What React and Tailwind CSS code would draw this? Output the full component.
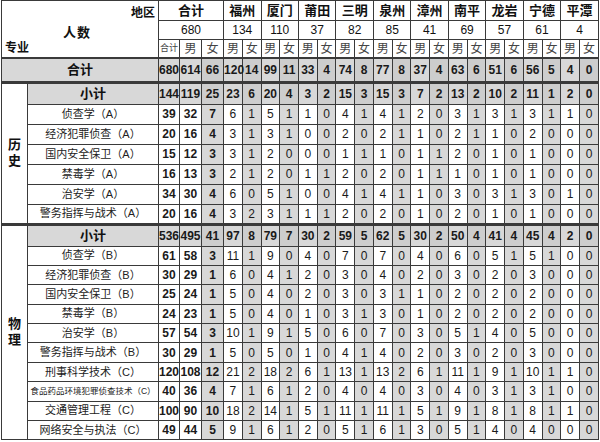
import React from "react";

const regions = ["福州", "厦门", "莆田", "三明", "泉州", "漳州", "南平", "龙岩", "宁德", "平潭"];
const regionTotals = [134, 110, 37, 82, 85, 41, 69, 57, 61, 4];
const totalRow = [680, 614, 66, 120, 14, 99, 11, 33, 4, 74, 8, 77, 8, 37, 4, 63, 6, 51, 6, 56, 5, 4, 0];

const groups = [
  {
    label: ["历", "史"],
    sub: [144, 119, 25, 23, 6, 20, 4, 3, 2, 15, 3, 15, 3, 7, 2, 13, 2, 10, 2, 11, 1, 2, 0],
    rows: [
      ["侦查学（A）", [39, 32, 7, 6, 1, 5, 1, 1, 0, 4, 1, 4, 1, 2, 0, 3, 1, 3, 1, 3, 1, 1, 0]],
      ["经济犯罪侦查（A）", [20, 16, 4, 3, 1, 3, 1, 0, 0, 2, 0, 2, 1, 1, 0, 2, 1, 1, 0, 2, 0, 0, 0]],
      ["国内安全保卫（A）", [15, 12, 3, 3, 1, 2, 0, 0, 0, 1, 1, 1, 0, 1, 1, 2, 0, 1, 0, 1, 0, 0, 0]],
      ["禁毒学（A）", [16, 13, 3, 2, 1, 2, 0, 1, 1, 2, 0, 2, 0, 1, 1, 1, 0, 1, 0, 1, 0, 0, 0]],
      ["治安学（A）", [34, 30, 4, 6, 0, 5, 1, 0, 0, 4, 1, 4, 1, 1, 0, 3, 0, 3, 1, 3, 0, 1, 0]],
      ["警务指挥与战术（A）", [20, 16, 4, 3, 2, 3, 1, 1, 1, 2, 0, 2, 0, 1, 0, 2, 0, 1, 0, 1, 0, 0, 0]],
    ],
    h: "h-[20px]",
  },
  {
    label: ["物", "理"],
    sub: [536, 495, 41, 97, 8, 79, 7, 30, 2, 59, 5, 62, 5, 30, 2, 50, 4, 41, 4, 45, 4, 2, 0],
    rows: [
      ["侦查学（B）", [61, 58, 3, 11, 1, 9, 0, 4, 0, 7, 0, 7, 0, 4, 0, 6, 0, 5, 1, 5, 1, 0, 0]],
      ["经济犯罪侦查（B）", [30, 29, 1, 6, 0, 4, 1, 2, 0, 3, 0, 4, 0, 2, 0, 3, 0, 2, 0, 3, 0, 0, 0]],
      ["国内安全保卫（B）", [25, 24, 1, 5, 0, 4, 0, 2, 0, 3, 0, 3, 1, 1, 0, 2, 0, 2, 0, 2, 0, 0, 0]],
      ["禁毒学（B）", [24, 23, 1, 5, 0, 4, 0, 1, 0, 3, 1, 3, 0, 1, 0, 2, 0, 2, 0, 2, 0, 0, 0]],
      ["治安学（B）", [57, 54, 3, 10, 1, 9, 1, 5, 0, 6, 0, 7, 0, 3, 0, 5, 1, 4, 0, 5, 0, 0, 0]],
      ["警务指挥与战术（B）", [30, 29, 1, 5, 0, 5, 0, 1, 0, 4, 1, 4, 0, 2, 0, 3, 0, 2, 0, 3, 0, 0, 0]],
      ["刑事科学技术（C）", [120, 108, 12, 21, 2, 18, 2, 6, 1, 13, 1, 13, 2, 6, 1, 11, 1, 9, 1, 10, 1, 1, 0]],
      ["食品药品环境犯罪侦查技术（C）", [40, 36, 4, 7, 1, 6, 1, 2, 0, 4, 0, 4, 0, 3, 0, 4, 0, 3, 1, 3, 1, 0, 0], true],
      ["交通管理工程（C）", [100, 90, 10, 18, 2, 14, 1, 5, 1, 11, 1, 11, 1, 5, 1, 9, 1, 8, 1, 8, 1, 1, 0]],
      ["网络安全与执法（C）", [49, 44, 5, 9, 1, 6, 1, 2, 0, 5, 1, 6, 1, 3, 0, 5, 1, 4, 0, 4, 0, 0, 0]],
    ],
    h: "h-[19.4px]",
  },
];

const cell = "border border-[#3a3a3a] p-0 text-center align-middle";

// index i in values: 0 合计, 1 男, 2 女, then pairs (odd index >=3 => 男, even => 女)
const isFemale = (i) => i === 2 || (i >= 3 && i % 2 === 0);

function DataCells({ values, highlight }) {
  return values.map((v, i) => {
    const fem = isFemale(i);
    let bg = "bg-white";
    if (highlight) bg = fem ? "bg-[#cdcdcd]" : "bg-[#d8d8d8]";
    else if (fem) bg = "bg-[#d8d8d8]";
    const weight = highlight || i < 3 ? "font-bold" : "font-normal";
    return (
      <td key={i} className={`${cell} ${bg} ${weight} text-[12px] text-[#1a1a1a]`}>
        {v}
      </td>
    );
  });
}

export default function App() {
  return (
    <div className="w-[600px] h-[442px] bg-white overflow-hidden font-['Liberation_Sans','Noto_Sans_CJK_SC',sans-serif]">
      <table className="table-fixed border-collapse w-[598px] ml-[1px] leading-none">
        <colgroup>
          <col className="w-[26px]" />
          <col className="w-[131px]" />
          <col className="w-[21px]" />
          <col className="w-[22px]" />
          <col className="w-[22px]" />
          {Array.from({ length: 20 }).map((_, i) => (
            <col key={i} />
          ))}
        </colgroup>
        <thead>
          <tr className="h-[20px]">
            <td rowSpan={3} colSpan={2} className={`${cell} border-b-2 bg-white`}>
              <div className="flex flex-col h-[56px] px-[3px] pt-[6px] pb-[3px] text-[#111] font-bold">
                <div className="text-right text-[12px]">地区</div>
                <div className="text-center text-[13px] mt-[7px] pr-[6px] tracking-[1px]">人数</div>
                <div className="text-left text-[12px] mt-auto">专业</div>
              </div>
            </td>
            <td colSpan={3} className={`${cell} bg-white font-bold text-[13px] text-[#111]`}>合计</td>
            {regions.map((r) => (
              <td key={r} colSpan={2} className={`${cell} bg-white font-bold text-[13px] text-[#111]`}>
                {r}
              </td>
            ))}
          </tr>
          <tr className="h-[19px]">
            <td colSpan={3} className={`${cell} bg-white text-[12px] text-[#111]`}>680</td>
            {regionTotals.map((t, i) => (
              <td key={i} colSpan={2} className={`${cell} bg-white text-[12px] text-[#111]`}>
                {t}
              </td>
            ))}
          </tr>
          <tr className="h-[18px]">
            <td className={`${cell} border-b-2 bg-white text-[9px] text-[#444]`}>合计</td>
            <td className={`${cell} border-b-2 bg-white text-[12px] text-[#444]`}>男</td>
            <td className={`${cell} border-b-2 bg-white text-[12px] text-[#444]`}>女</td>
            {regions.map((r) => (
              <React.Fragment key={r}>
                <td className={`${cell} border-b-2 bg-white text-[12px] text-[#444]`}>男</td>
                <td className={`${cell} border-b-2 bg-white text-[12px] text-[#444]`}>女</td>
              </React.Fragment>
            ))}
          </tr>
        </thead>
        <tbody>
          <tr className="h-[24px] border-b-[3px] border-[#3a3a3a]">
            <td colSpan={2} className={`${cell} bg-[#d8d8d8] font-bold text-[13px] text-[#111]`}>合计</td>
            <DataCells values={totalRow} highlight />
          </tr>
          {groups.map((g, gi) => (
            <React.Fragment key={gi}>
              <tr className={`h-[22px] ${gi === 0 ? "" : "border-t-[3px] border-[#3a3a3a]"}`}>
                <td rowSpan={g.rows.length + 1} className={`${cell} bg-white`}>
                  <div className="flex flex-col items-center font-bold text-[13px] text-[#111] leading-[16px]">
                    {g.label.map((c) => (
                      <span key={c}>{c}</span>
                    ))}
                  </div>
                </td>
                <td className={`${cell} bg-[#d8d8d8] font-bold text-[13px] text-[#111]`}>小计</td>
                <DataCells values={g.sub} highlight />
              </tr>
              {g.rows.map(([name, vals, small]) => (
                <tr key={name} className={g.h}>
                  <td className={`${cell} bg-white text-[#222] ${small ? "text-[8.5px]" : "text-[11px]"}`}>{name}</td>
                  <DataCells values={vals} />
                </tr>
              ))}
            </React.Fragment>
          ))}
        </tbody>
      </table>
    </div>
  );
}
